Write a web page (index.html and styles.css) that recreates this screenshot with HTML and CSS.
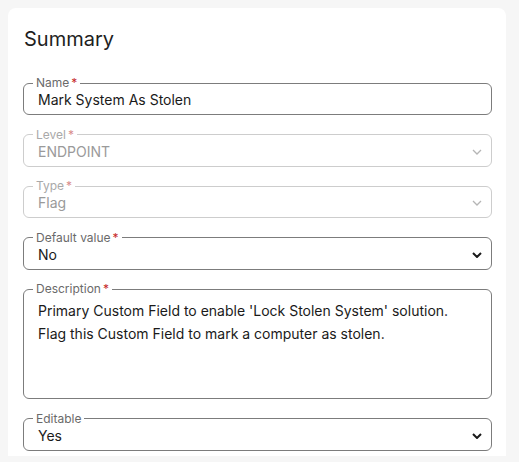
FILE: index.html
```html
<!DOCTYPE html>
<html lang="en">
<head>
<meta charset="utf-8">
<title>Summary</title>
<link rel="stylesheet" href="styles.css">
</head>
<body>
<section class="card">
  <h2 class="title">Summary</h2>
  <div class="fields">
    <fieldset class="field">
      <legend class="label">Name<span class="req">*</span></legend>
      <div class="row"><span class="value">Mark System As Stolen</span></div>
    </fieldset>
    <fieldset class="field disabled">
      <legend class="label">Level<span class="req">*</span></legend>
      <div class="row"><span class="value">ENDPOINT</span>
        <svg class="chev" width="10" height="6" viewBox="0 0 10 6"><path d="M1 1l4 4 4-4" fill="none" stroke="currentColor" stroke-width="1.3"/></svg></div>
    </fieldset>
    <fieldset class="field disabled">
      <legend class="label">Type<span class="req">*</span></legend>
      <div class="row"><span class="value">Flag</span>
        <svg class="chev" width="10" height="6" viewBox="0 0 10 6"><path d="M1 1l4 4 4-4" fill="none" stroke="currentColor" stroke-width="1.3"/></svg></div>
    </fieldset>
    <fieldset class="field">
      <legend class="label">Default value<span class="req">*</span></legend>
      <div class="row"><span class="value">No</span>
        <svg class="chev" width="10" height="6" viewBox="0 0 10 6"><path d="M1 1l4 4 4-4" fill="none" stroke="currentColor" stroke-width="2"/></svg></div>
    </fieldset>
    <fieldset class="field">
      <legend class="label">Description<span class="req">*</span></legend>
      <div class="textarea">Primary Custom Field to enable 'Lock Stolen System' solution.
Flag this Custom Field to mark a computer as stolen.</div>
    </fieldset>
    <fieldset class="field">
      <legend class="label">Editable</legend>
      <div class="row"><span class="value">Yes</span>
        <svg class="chev" width="10" height="6" viewBox="0 0 10 6"><path d="M1 1l4 4 4-4" fill="none" stroke="currentColor" stroke-width="2"/></svg></div>
    </fieldset>
  </div>
</section>
</body>
</html>
```
FILE: styles.css
```css
html, body {
  margin: 0;
  padding: 0;
}
body {
  background: #f6f6f6;
  font-family: Inter, "Liberation Sans", sans-serif;
  color: #1f1f1f;
  padding: 8px 0 0 8px;
  height: 462px;
  box-sizing: border-box;
  overflow: hidden;
}
.card {
  width: 498px;
  background: #ffffff;
  border-radius: 8px 8px 0 0;
  padding: 19px 14px 5px 15px;
  box-sizing: border-box;
}
.title {
  margin: 0 0 25px 1px;
  font-size: 20px;
  line-height: 24px;
  font-weight: 400;
  color: #1e1e1e;
}
.fields {
  display: flex;
  flex-direction: column;
  gap: 12.5px;
}
.field {
  margin: 0;
  border: 1px solid #7c7c7c;
  border-radius: 6px;
  padding: 0 7px 4px 9px;
  min-width: 0;
}
.label {
  padding: 0 3px;
  font-size: 12px;
  line-height: 14px;
  color: #6a6a6a;
}
.req {
  color: #c62828;
  margin-left: 2px;
}
.row {
  display: flex;
  align-items: center;
  justify-content: space-between;
  height: 20px;
  padding-left: 5px;
}
.value {
  font-size: 14px;
  line-height: 20px;
  color: #1a1a1a;
}
.chev {
  color: #1a1a1a;
  margin-right: 2px;
}
.disabled {
  border-color: #cdcdcd;
}
.disabled .label {
  color: #a9a9a9;
}
.disabled .req {
  color: #d98c8c;
}
.disabled .value {
  color: #9a9a9a;
}
.disabled .chev {
  color: #b5b5b5;
}
.textarea {
  font-size: 14px;
  line-height: 22.5px;
  color: #1a1a1a;
  padding: 4px 0 0 5px;
  height: 98px;
  box-sizing: border-box;
  white-space: pre-wrap;
}
```
